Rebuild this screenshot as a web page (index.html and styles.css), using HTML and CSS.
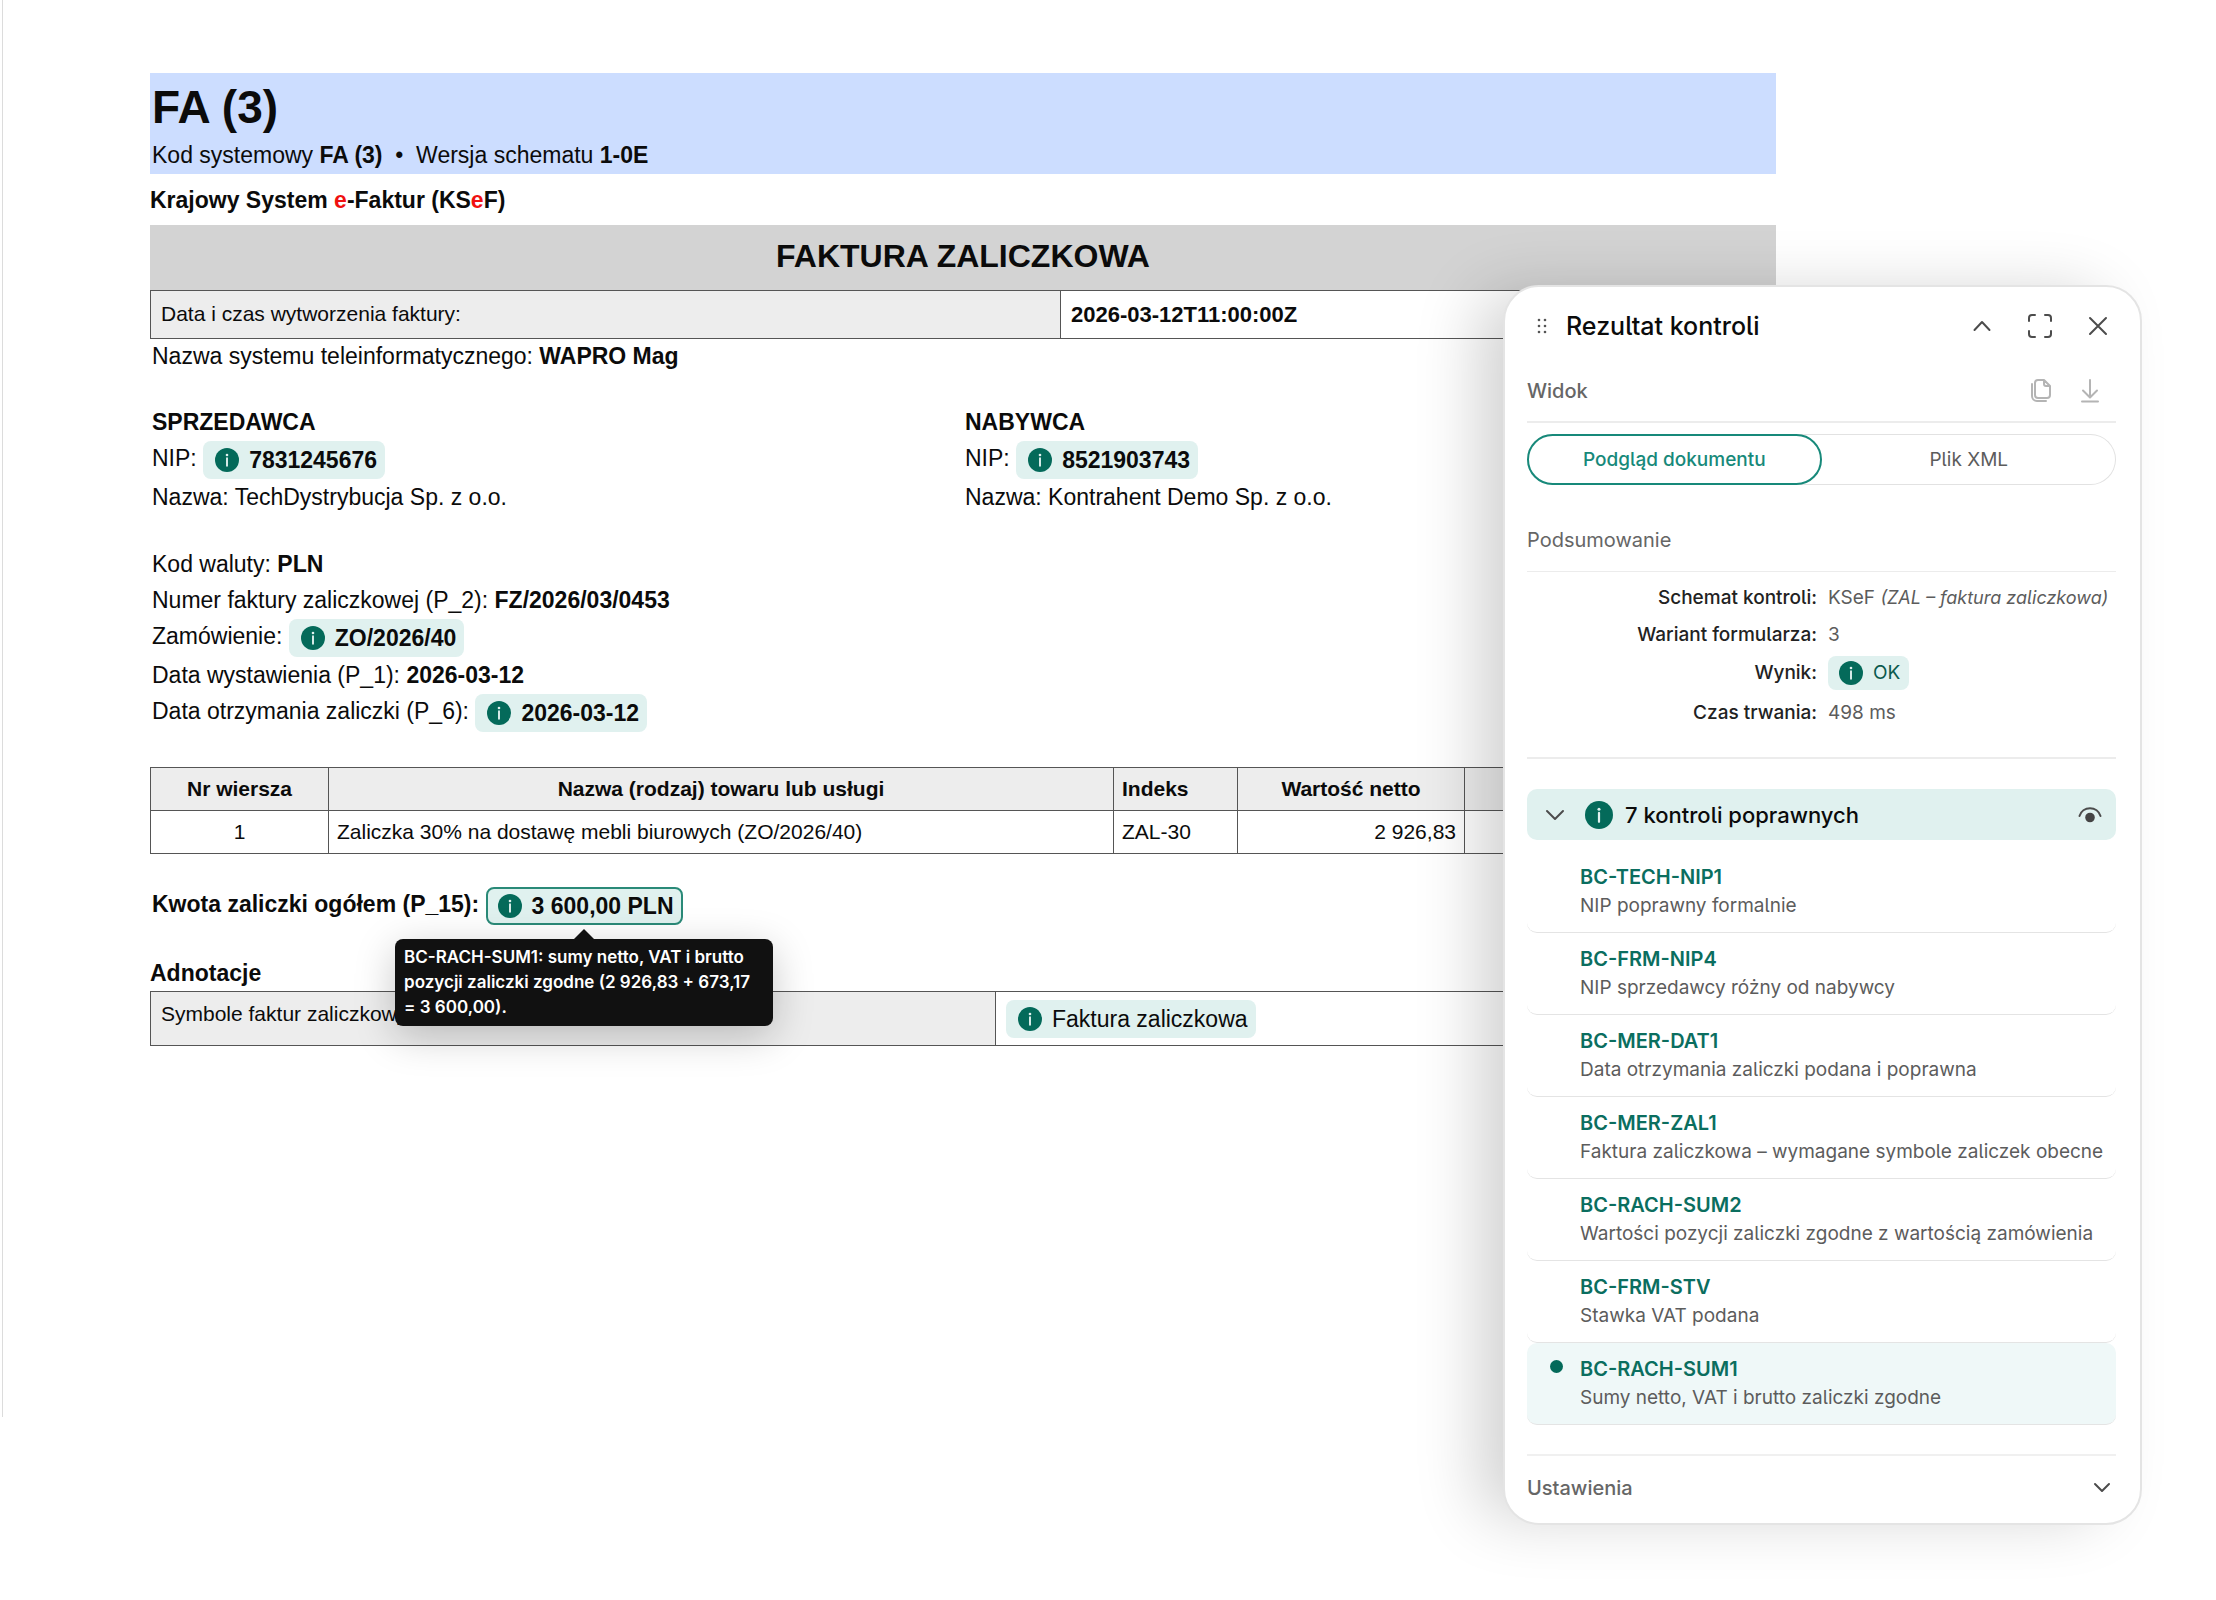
FILE: index.html
```html
<!DOCTYPE html>
<html lang="pl">
<head>
<meta charset="utf-8">
<title>FA (3) – Faktura zaliczkowa</title>
<link rel="stylesheet" href="styles.css">
</head>
<body>
<svg class="sprite" aria-hidden="true">
  <symbol id="info" viewBox="0 0 24 24"><circle cx="12" cy="12" r="12" fill="#046a5a"/><circle cx="12" cy="7" r="1.3" fill="#e0f1ef"/><path d="M12 10.2v7.6" stroke="#e0f1ef" stroke-width="1.9" stroke-linecap="round"/></symbol>
</svg>
<main class="page">
  <article class="invoice">
    <header class="schema">
      <h1>FA (3)</h1>
      <p>Kod systemowy <b>FA (3)</b> &nbsp;•&nbsp; Wersja schematu <b>1-0E</b></p>
    </header>
    <p class="ksef">Krajowy System <em>e</em>-Faktur (KS<em>e</em>F)</p>
    <h2 class="doc-title">FAKTURA ZALICZKOWA</h2>
    <table class="grid created">
      <tr><th scope="row">Data i czas wytworzenia faktury:</th><td><b>2026-03-12T11:00:00Z</b></td></tr>
    </table>
    <p class="line">Nazwa systemu teleinformatycznego: <b>WAPRO Mag</b></p>

    <div class="parties">
      <section>
        <h3 class="line">SPRZEDAWCA</h3>
        <p class="line tagged">NIP: <span class="tag"><svg><use href="#info"/></svg><b>7831245676</b></span></p>
        <p class="line">Nazwa: TechDystrybucja Sp. z o.o.</p>
      </section>
      <section>
        <h3 class="line">NABYWCA</h3>
        <p class="line tagged">NIP: <span class="tag"><svg><use href="#info"/></svg><b>8521903743</b></span></p>
        <p class="line">Nazwa: Kontrahent Demo Sp. z o.o.</p>
      </section>
    </div>

    <section class="details">
      <p class="line">Kod waluty: <b>PLN</b></p>
      <p class="line">Numer faktury zaliczkowej (P_2): <b>FZ/2026/03/0453</b></p>
      <p class="line tagged">Zamówienie: <span class="tag"><svg><use href="#info"/></svg><b>ZO/2026/40</b></span></p>
      <p class="line">Data wystawienia (P_1): <b>2026-03-12</b></p>
      <p class="line tagged">Data otrzymania zaliczki (P_6): <span class="tag"><svg><use href="#info"/></svg><b>2026-03-12</b></span></p>
    </section>

    <table class="grid items">
      <colgroup><col class="c-no"><col><col class="c-index"><col class="c-net"><col class="c-rest"></colgroup>
      <thead><tr><th>Nr wiersza</th><th>Nazwa (rodzaj) towaru lub usługi</th><th class="start">Indeks</th><th>Wartość netto</th><th></th></tr></thead>
      <tbody><tr><td class="mid">1</td><td>Zaliczka 30% na dostawę mebli biurowych (ZO/2026/40)</td><td>ZAL-30</td><td class="end">2 926,83</td><td></td></tr></tbody>
    </table>

    <p class="line tagged total"><b>Kwota zaliczki ogółem (P_15):</b>
      <span class="tag active"><svg><use href="#info"/></svg><b>3 600,00 PLN</b>
        <span class="tooltip" role="tooltip">BC-RACH-SUM1: sumy netto, VAT i brutto pozycji zaliczki zgodne (2 926,83 + 673,17 = 3 600,00).</span>
      </span>
    </p>

    <h3 class="line notes-title">Adnotacje</h3>
    <table class="grid notes">
      <tr><th scope="row">Symbole faktur zaliczkowych:</th><td><span class="tag"><svg><use href="#info"/></svg>Faktura zaliczkowa</span></td></tr>
    </table>
  </article>
</main>

<aside class="panel" aria-label="Rezultat kontroli">
  <header class="panel-head">
    <svg class="grip" viewBox="0 0 10 16"><g fill="#555"><circle cx="2" cy="2" r="1.3"/><circle cx="8" cy="2" r="1.3"/><circle cx="2" cy="8" r="1.3"/><circle cx="8" cy="8" r="1.3"/><circle cx="2" cy="14" r="1.3"/><circle cx="8" cy="14" r="1.3"/></g></svg>
    <h2>Rezultat kontroli</h2>
    <button type="button" aria-label="Zwiń"><svg viewBox="0 0 24 24"><path d="M4.500 16 12 8l7.500 8"/></svg></button>
    <button type="button" aria-label="Pełny ekran"><svg viewBox="0 0 24 24"><path d="M1 7V4a3 3 0 0 1 3-3h3M17 1h3a3 3 0 0 1 3 3v3M23 17v3a3 3 0 0 1-3 3h-3M7 23H4a3 3 0 0 1-3-3v-3"/></svg></button>
    <button type="button" aria-label="Zamknij"><svg viewBox="0 0 24 24"><path d="m4 4 16 16M20 4 4 20"/></svg></button>
  </header>

  <div class="bar">
    <h3>Widok</h3>
    <button type="button" class="faint" aria-label="Kopiuj"><svg viewBox="0 0 24 24"><path d="M9 1h6l6 6v9a3 3 0 0 1-3 3H9a3 3 0 0 1-3-3V4a3 3 0 0 1 3-3ZM15 1v4a2 2 0 0 0 2 2h4M3 5v12a5 5 0 0 0 5 5h9"/></svg></button>
    <button type="button" class="faint" aria-label="Pobierz"><svg viewBox="0 0 24 24"><path d="M12 1v17M5 11.500l7 7 7-7M4 22.500h16"/></svg></button>
  </div>
  <div class="tabs">
    <button type="button" class="selected">Podgląd dokumentu</button>
    <button type="button">Plik XML</button>
  </div>

  <div class="bar summary-bar"><h3>Podsumowanie</h3></div>
  <dl class="summary">
    <dt>Schemat kontroli:</dt><dd>KSeF <i>(ZAL – faktura zaliczkowa)</i></dd>
    <dt>Wariant formularza:</dt><dd>3</dd>
    <dt class="tall">Wynik:</dt><dd class="tall"><span class="tag small"><svg><use href="#info"/></svg>OK</span></dd>
    <dt class="tall">Czas trwania:</dt><dd class="tall">498 ms</dd>
  </dl>

  <div class="group">
    <svg class="chevron" viewBox="0 0 20 20"><path d="m2 6 8 8 8-8"/></svg>
    <svg class="badge"><use href="#info"/></svg>
    <h3>7 kontroli poprawnych</h3>
    <button type="button" aria-label="Pokaż"><svg viewBox="0 0 24 24"><path d="M1.500 13a11 11 0 0 1 21 0"/><circle class="solid" cx="12" cy="14.500" r="4.800"/></svg></button>
  </div>
  <ul class="checks">
    <li><a href="#">BC-TECH-NIP1</a><p>NIP poprawny formalnie</p></li>
    <li><a href="#">BC-FRM-NIP4</a><p>NIP sprzedawcy różny od nabywcy</p></li>
    <li><a href="#">BC-MER-DAT1</a><p>Data otrzymania zaliczki podana i poprawna</p></li>
    <li><a href="#">BC-MER-ZAL1</a><p>Faktura zaliczkowa – wymagane symbole zaliczek obecne</p></li>
    <li><a href="#">BC-RACH-SUM2</a><p>Wartości pozycji zaliczki zgodne z wartością zamówienia</p></li>
    <li><a href="#">BC-FRM-STV</a><p>Stawka VAT podana</p></li>
    <li class="current"><a href="#">BC-RACH-SUM1</a><p>Sumy netto, VAT i brutto zaliczki zgodne</p></li>
  </ul>

  <button type="button" class="settings">Ustawienia<svg viewBox="0 0 20 20"><path d="m3 6 7 7 7-7"/></svg></button>
</aside>
</body>
</html>
```
FILE: styles.css
```css
* { box-sizing: border-box; }
body, h1, h2, h3, p, ul, dl, dd { margin: 0; }
h1, h2, h3 { font-size: inherit; font-weight: inherit; }

body {
  position: relative;
  min-height: 100vh;
  background: #fff;
  color: #0b0b0b;
  font: 23px/36px "Liberation Sans", Arial, sans-serif;
}
.sprite { position: absolute; width: 0; height: 0; }
button { border: 0; padding: 0; background: none; font: inherit; color: inherit; cursor: pointer; }

/* invoice */
.page {
  min-height: 1417px;
  margin-left: 2px;
  border-left: 1px solid #dcdcdc;
  padding: 73px 440px 0 147px;
}
.schema { padding: 4px 2px 1px; background: #ccddff; }
.schema h1 { font-size: 46px; line-height: 60px; font-weight: bold; text-rendering: optimizeLegibility; }
.schema p { line-height: 36px; }
.ksef { padding: 8px 0 7px; font-weight: bold; }
.ksef em { color: #f01010; font-style: normal; }
.doc-title {
  padding-bottom: 2px;
  background: #d3d3d3;
  font-size: 32px;
  font-weight: bold;
  line-height: 63px;
  text-align: center;
  text-rendering: optimizeLegibility;
}
.line { padding-left: 2px; line-height: 36px; }
h3.line { font-weight: bold; }
.tagged { line-height: 34px; height: 39px; padding-top: 1px; }
.tag {
  position: relative;
  display: inline-flex;
  align-items: center;
  height: 38px;
  padding: 0 8px 0 12px;
  border-radius: 8px;
  background: #e0f1ef;
  vertical-align: top;
}
.tag svg { width: 24px; height: 24px; margin-right: 10px; }
.tag.active { padding: 0 7px 0 10px; border: 2px solid #2a8a78; }

.grid { width: 100%; border-collapse: collapse; table-layout: fixed; font-size: 21px; }
.grid th, .grid td { border: 1px solid #555; padding: 0 8px; text-align: left; line-height: 28px; }
.grid th { background: #ededed; font-weight: normal; }
.created th { width: 56%; }
.created th, .created td { height: 48px; padding: 0 10px; }
.created th { padding-bottom: 2px; }
.created b { font-size: 22px; }
.created + .line { margin-top: -1px; }

.parties { display: grid; grid-template-columns: 1fr 1fr; margin-top: 30px; }
.details { margin: 31px 0 35px; }

.items th, .items td { height: 43px; }
.items thead th { font-weight: bold; text-align: center; }
.items .start { text-align: left; }
.items .mid { text-align: center; }
.items .end { text-align: right; }
.c-no { width: 178px; }
.c-index { width: 124px; }
.c-net { width: 227px; }
.c-rest { width: 311px; }

.total { margin-top: 32px; }
.notes-title { padding: 0; margin-top: 30px; }
.notes th { width: 52%; vertical-align: top; padding: 8px 10px; }
.notes td { height: 54px; padding: 0 10px; }
.notes .tag { font-size: 23px; vertical-align: middle; }

.tooltip {
  position: absolute;
  top: 50px;
  left: 50%;
  width: 378px;
  margin-left: -189px;
  padding: 6px 9px;
  border-radius: 8px;
  background: #111;
  box-shadow: 0 10px 40px rgba(0, 0, 0, .22);
  color: #fff;
  font: 600 17px/25px Inter, "Liberation Sans", sans-serif;
  z-index: 2;
}
.tooltip::before {
  content: "";
  position: absolute;
  top: -10px;
  left: 50%;
  margin-left: -11px;
  border: 11px solid transparent;
  border-top: 0;
  border-bottom-color: #111;
}

/* result panel */
.panel {
  position: absolute;
  top: 285px;
  right: 74px;
  width: 639px;
  padding: 10px 24px 4px 22px;
  border: 2px solid #e4e4e4;
  border-radius: 36px;
  background: #fff;
  box-shadow: -32px 0 64px -8px rgba(0, 0, 0, .18);
  font: 19px/30px Inter, "Liberation Sans", sans-serif;
  font-feature-settings: "cv05";
  color: #5c5c5c;
  z-index: 3;
}
.panel svg { fill: none; stroke: #4c4c4c; stroke-width: 2; stroke-linecap: round; stroke-linejoin: round; }
.panel-head { display: flex; align-items: center; height: 57px; padding: 0 4px 0 10px; }
.panel-head h2 { flex: 1; padding-left: 19px; font-size: 25px; font-weight: 500; color: #0b0b0b; }
.panel-head .grip { width: 10px; height: 16px; stroke: none; }
.panel-head button { display: grid; place-items: center; width: 28px; height: 40px; margin-left: 30px; }
.panel-head button svg { width: 24px; height: 24px; }

.bar { display: flex; align-items: center; height: 69px; padding-top: 6px; border-bottom: 2px solid #ececec; }
.bar h3 { flex: 1; font-weight: 500; font-size: 20px; color: #666; }
.bar button { display: grid; place-items: center; width: 24px; height: 40px; margin-right: 25px; }
.bar button svg { width: 24px; height: 24px; stroke: #b4b4b4; }
.bar button:last-child { margin-right: 14px; }

.tabs { display: grid; grid-template-columns: 1fr 1fr; margin-top: 11px; border-radius: 26px; box-shadow: inset 0 0 0 1px #e2e2e2; }
.tabs button { height: 51px; border-radius: 26px; }
.tabs .selected { border: 2px solid #17897a; color: #17897a; font-weight: 500; }

.summary-bar { height: 66px; margin-top: 21px; padding-top: 3px; border-bottom-width: 1px; }
.summary-bar h3 { font-weight: 400; }
.summary {
  display: grid;
  grid-template-columns: 290px 1fr;
  column-gap: 11px;
  padding: 7px 0 24px;
  border-bottom: 2px solid #ececec;
}
.summary dt, .summary dd { height: 37px; line-height: 37px; white-space: nowrap; }
.summary dt { text-align: right; font-weight: 500; color: #222; }
.summary i { font-size: 18px; }
.summary .tall { height: 40px; line-height: 40px; }
.tag.small { height: 34px; line-height: 34px; margin-top: 3px; padding: 0 9px 0 11px; color: #0c5a4e; }
.tag.small svg { stroke: none; }

.group { display: flex; align-items: center; height: 51px; margin-top: 30px; padding: 0 14px 0 18px; border-radius: 10px; background: #e0f1ef; }
.group .chevron { width: 20px; height: 20px; }
.group .badge { width: 28px; height: 28px; margin: 0 12px 0 20px; stroke: none; }
.group h3 { flex: 1; font-size: 22px; font-weight: 500; color: #0b0b0b; }
.group button, .group button svg { display: block; width: 24px; height: 24px; }
.group .solid { fill: #444; stroke: none; }

.checks { list-style: none; padding: 0; margin-top: 11px; }
.checks li { position: relative; height: 82px; padding: 11px 0 0 53px; border-bottom: 1px solid #e4e4e4; border-radius: 10px; white-space: nowrap; }
.checks a { display: block; color: #0b6e5f; font-size: 20px; font-weight: 600; text-decoration: none; }
.checks p { line-height: 28px; }
.checks .current { background: #eff8f8; }
.checks .current::before { content: ""; position: absolute; left: 23px; top: 17px; width: 13px; height: 13px; border-radius: 50%; background: #046a5a; }

.settings { display: flex; align-items: center; justify-content: space-between; width: 100%; height: 65px; margin-top: 29px; padding-right: 4px; border-top: 2px solid #f0f0f0; font-size: 20px; font-weight: 500; color: #666; }
.settings svg { width: 20px; height: 20px; }
```
